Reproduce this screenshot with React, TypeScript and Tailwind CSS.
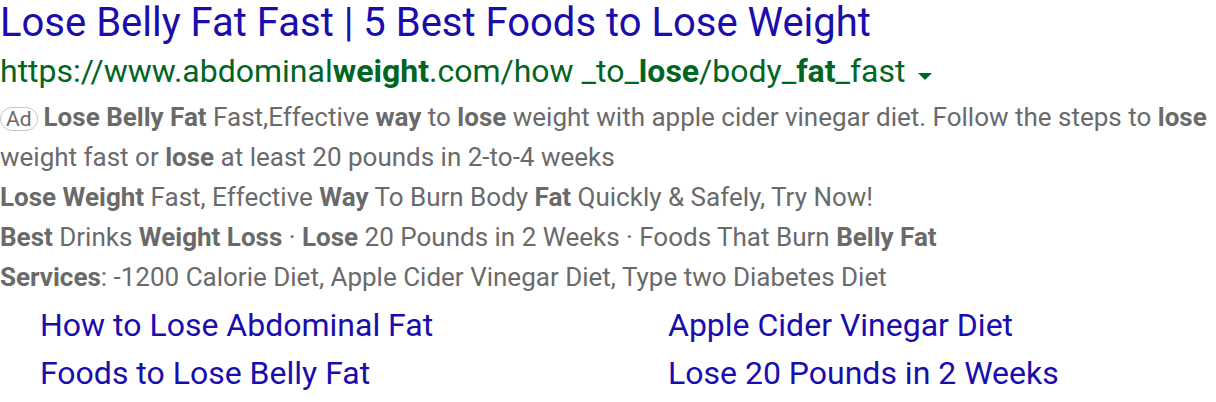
export default function App() {
  return (
    <div className="w-[1216px] h-[402px] bg-white overflow-hidden font-['Roboto',sans-serif]">
      <div className="text-[40px] leading-[46px] text-[#1a0dab] whitespace-nowrap">
        Lose Belly Fat Fast | 5 Best Foods to Lose Weight
      </div>

      <div className="flex items-center text-[32px] leading-[51px] text-[#006621] whitespace-nowrap">
        <span>
          https://www.abdominal<b>weight</b>.com/how _to_<b>lose</b>/body_<b>fat</b>_fast
        </span>
        <span className="ml-[12px] mt-[9px] h-0 w-0 border-x-[7px] border-t-[7px] border-x-transparent border-t-[#006621]" />
      </div>

      <div className="text-[26px] leading-[40px] text-[#6a6a6a] whitespace-nowrap">
        <div>
          <span className="mr-[6px] inline-block rounded-[12px] border border-[#c6c6c6] px-[5px] text-[21px] leading-[22px]">
            Ad
          </span>
          <b>Lose Belly Fat</b> Fast,Effective <b>way</b> to <b>lose</b> weight with apple cider vinegar diet. Follow the steps to <b>lose</b>
        </div>
        <div>
          weight fast or <b>lose</b> at least 20 pounds in 2-to-4 weeks
        </div>
        <div>
          <b>Lose Weight</b> Fast, Effective <b>Way</b> To Burn Body <b>Fat</b> Quickly &amp; Safely, Try Now!
        </div>
        <div>
          <b>Best</b> Drinks <b>Weight Loss</b> · <b>Lose</b> 20 Pounds in 2 Weeks · Foods That Burn <b>Belly Fat</b>
        </div>
        <div>
          <b>Services</b>: -1200 Calorie Diet, Apple Cider Vinegar Diet, Type two Diabetes Diet
        </div>
      </div>

      <div className="mt-[4px] grid grid-cols-[628px_1fr] pl-[40px] text-[32px] leading-[48px] text-[#1a0dab] whitespace-nowrap">
        <div>How to Lose Abdominal Fat</div>
        <div>Apple Cider Vinegar Diet</div>
        <div>Foods to Lose Belly Fat</div>
        <div>Lose 20 Pounds in 2 Weeks</div>
      </div>
    </div>
  );
}
